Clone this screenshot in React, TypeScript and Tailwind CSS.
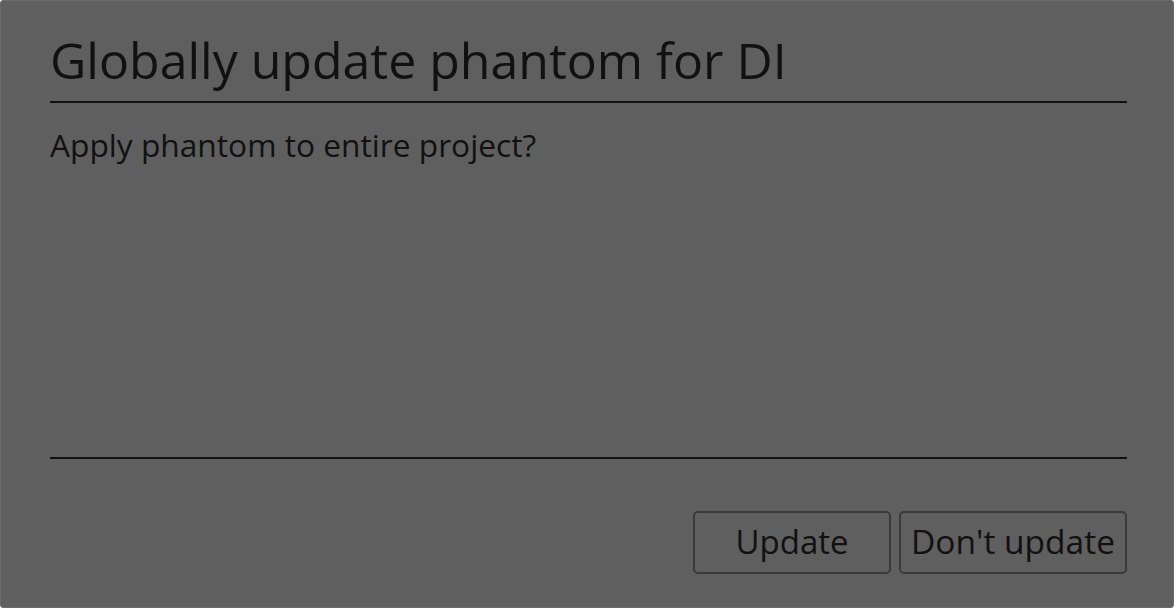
import React from "react";

export default function App() {
  return (
    <div
      className="w-[1174px] h-[608px] bg-[#5f5f5f] border border-[#6a6a6a] rounded-[3px] flex flex-col pl-[49px] pr-[46px] text-[#111111]"
      style={{ fontFamily: '"Open Sans", "Noto Sans", sans-serif' }}
    >
      <div className="pt-[22px] h-[102px] border-b-2 border-[#111111] text-[50px] leading-[74px] whitespace-nowrap">
        Globally update phantom for DI
      </div>
      <div className="h-[356px] border-b-2 border-[#111111] pt-[20px] text-[31.7px] leading-[44px] whitespace-nowrap">
        Apply phantom to entire project?
      </div>
      <div className="flex justify-end gap-[8px] pt-[52px]">
        <button className="w-[198px] h-[63px] border-2 border-[#3a3a3a] rounded-[5px] text-[33px] leading-none pb-[2px] whitespace-nowrap">
          Update
        </button>
        <button className="w-[228px] h-[63px] border-2 border-[#3a3a3a] rounded-[5px] text-[33.5px] leading-none pb-[2px] whitespace-nowrap">
          Don't update
        </button>
      </div>
    </div>
  );
}
